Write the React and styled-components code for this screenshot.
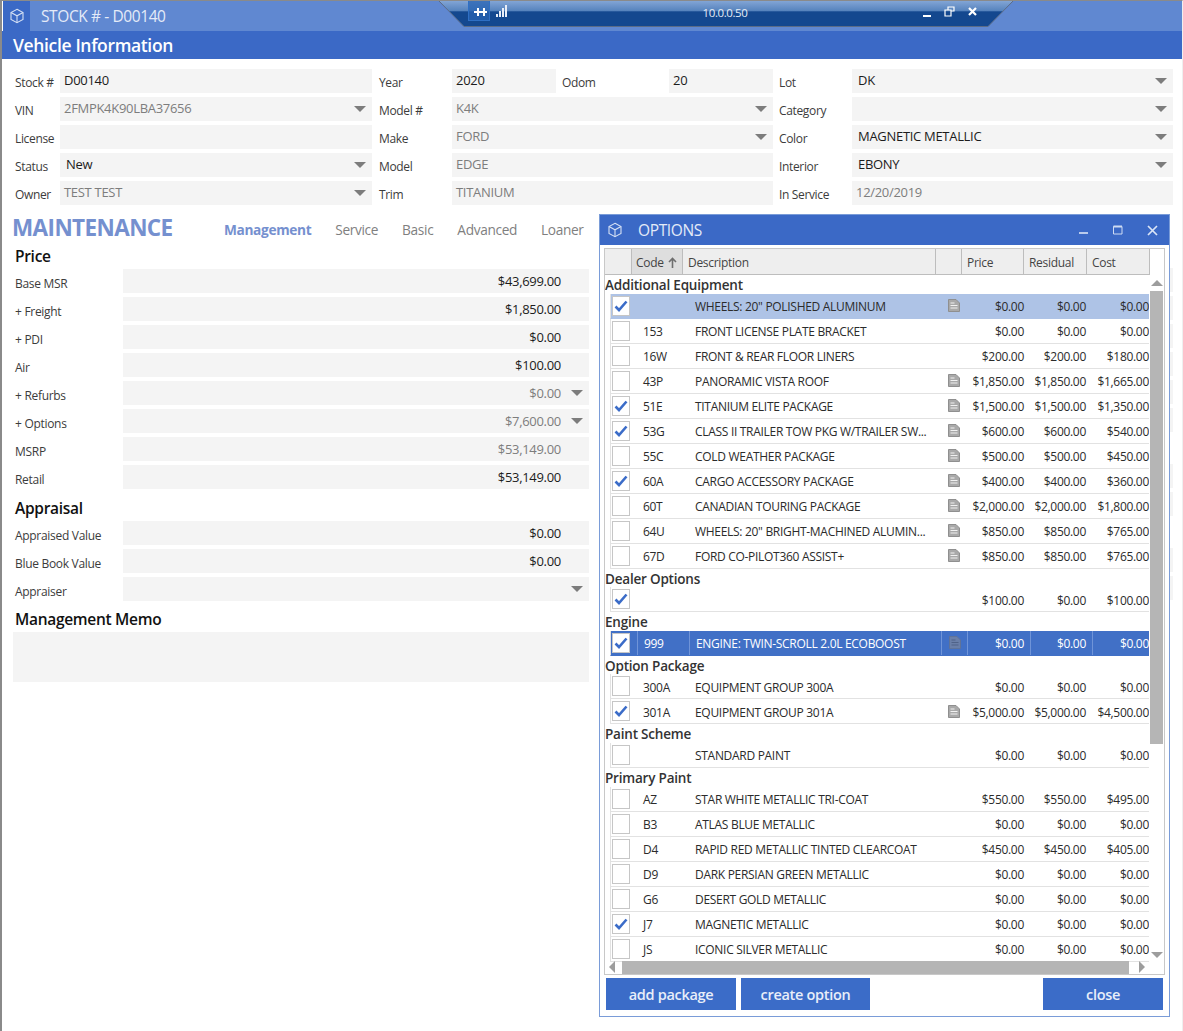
import React from 'react';
import styled, { createGlobalStyle } from 'styled-components';

const GlobalStyle = createGlobalStyle`
  html, body { margin: 0; padding: 0; background: #fff; }
  body { font-family: "Open Sans", "Noto Sans", sans-serif; color: #333; }
  * { box-sizing: border-box; }
`;

const Page = styled.div`
  position: relative;
  width: 1183px;
  height: 1031px;
  overflow: hidden;
  background: #fff;
  border-left: 2px solid #8a8a8a;
  border-top: 1px solid #8a8a8a;
  border-right: 1px solid #efefef;
`;

const TitleBar = styled.div`
  height: 30px;
  background: #6088d1;
  display: flex;
  align-items: center;
  margin-left: 1px;
`;

const TitleIcon = styled.div`
  width: 27px;
  height: 30px;
  display: flex;
  align-items: center;
  justify-content: center;
  background: #3b69c6;
`;

const TitleText = styled.div`
  margin-left: 11px;
  color: #e4ebf8;
  font-size: 15.5px;
  letter-spacing: -0.4px;
`;

const SectionBar = styled.div`
  height: 28px;
  margin-left: -2px;
  padding-left: 13px;
  display: flex;
  align-items: center;
  background: #3b69c6;
  color: #fff;
  font-size: 17.5px;
  font-weight: 600;
  letter-spacing: -0.35px;
`;

const RemoteBar = styled.div`
  position: absolute;
  left: 436px;
  top: -1px;
  width: 580px;
  height: 28px;
  z-index: 5;
`;

const RemoteShape = styled.svg`
  position: absolute;
  inset: 0;
`;

const RemoteText = styled.div`
  position: absolute;
  left: 264px;
  top: 5px;
  width: 46px;
  text-align: center;
  color: #e6edf7;
  font-size: 11.5px;
  letter-spacing: -0.4px;
`;

const FormGrid = styled.div`
  display: grid;
  grid-template-columns: 45px 312px 7px 73px 104px 6px 107px 104px 6px 73px 321px;
  grid-auto-rows: 24px;
  row-gap: 4px;
  margin-left: -2px;
  padding: 10px 0 0 15px;
`;

const Label = styled.div`
  font-size: 12px;
  letter-spacing: -0.35px;
  line-height: 24px;
  padding-top: 2px;
  color: #3c3c3c;
  white-space: nowrap;
  grid-column: ${p => p.$col} / span 1;
`;

const Field = styled.div`
  position: relative;
  height: 24px;
  background: #f4f4f4;
  font-size: 13px;
  letter-spacing: -0.3px;
  line-height: 23px;
  padding: 0 ${p => (p.$right ? '28px' : '4px')} 0 ${p => (p.$inset ? '6px' : '4px')};
  color: ${p => (p.$muted ? '#7d7d7d' : '#1c1c1c')};
  text-align: ${p => (p.$right ? 'right' : 'left')};
  grid-column: ${p => p.$col} / ${p => p.$end || 'span 1'};
`;

const Caret = styled.span`
  position: absolute;
  right: ${p => p.$right || 6}px;
  top: 9px;
  width: 0;
  height: 0;
  border-left: 6px solid transparent;
  border-right: 6px solid transparent;
  border-top: 6px solid #7c7c7c;
`;

const Lower = styled.div`
  display: grid;
  grid-template-columns: 576px 573px;
  column-gap: 11px;
  margin-left: -2px;
  padding: 10px 0 0 13px;
`;

const LeftColumn = styled.div`
  display: flex;
  flex-direction: column;
`;

const TabLine = styled.div`
  display: flex;
  align-items: center;
  height: 26px;
`;

const BigTitle = styled.div`
  width: 211px;
  margin-left: -1px;
  margin-right: 1px;
  color: #7590cf;
  font-size: 22.5px;
  font-weight: 700;
  letter-spacing: -0.6px;
  white-space: nowrap;
  margin-top: -2px;
`;

const Tabs = styled.div`
  display: flex;
  gap: 24px;
  padding-top: 2px;
`;

const Tab = styled.div`
  font-size: 13.7px;
  letter-spacing: -0.35px;
  font-weight: ${p => (p.$active ? 700 : 400)};
  color: ${p => (p.$active ? '#7590cf' : '#7f7f7f')};
`;

const Heading = styled.div`
  padding-left: 2px;
  font-size: 15.5px;
  line-height: 20px;
  font-weight: 600;
  letter-spacing: -0.3px;
  color: #111;
  margin: ${p => p.$top || 0}px 0 ${p => p.$bottom || 3}px;
`;

const PriceRow = styled.div`
  display: flex;
  height: 24px;
  margin-bottom: 4px;
`;

const PriceLabel = styled.div`
  width: 110px;
  padding: 3px 0 0 2px;
  font-size: 12px;
  letter-spacing: -0.3px;
  line-height: 24px;
  color: #3c3c3c;
`;

const PriceField = styled(Field)`
  flex: 1;
  line-height: 25px;
`;

const MemoBox = styled.div`
  height: 50px;
  background: #f4f4f4;
`;

const BehindColumn = styled.div`
  display: flex;
  flex-direction: column;
  padding-top: 53px;
`;

const BehindRow = styled.div`
  height: 24px;
  margin-bottom: 4px;
  margin-top: ${p => p.$skip || 0}px;
  background: #f4f4f4;
`;

const Dialog = styled.div`
  position: absolute;
  left: 597px;
  top: 213px;
  width: 571px;
  height: 803px;
  background: #fff;
  border: 1px solid #7a9cd8;
  z-index: 3;
  display: flex;
  flex-direction: column;
`;

const DialogHead = styled.div`
  height: 30px;
  flex: none;
  display: flex;
  align-items: center;
  padding-left: 7px;
  background: #3b69c6;
`;

const DialogTitle = styled.div`
  margin-left: 15px;
  color: #e4ebf8;
  font-size: 15.5px;
  letter-spacing: -0.35px;
  flex: 1;
`;

const WinButton = styled.button`
  width: 34px;
  height: 30px;
  padding: 0;
  border: 0;
  background: none;
  display: flex;
  align-items: center;
  justify-content: center;
`;

const TableFrame = styled.div`
  position: relative;
  flex: none;
  margin: 3px 4px 0;
  height: 727px;
  border: 1px solid #c8c8c8;
  overflow: hidden;
`;

const HeadRow = styled.div`
  display: grid;
  grid-template-columns: 27px 51px 253px 26px 62px 63px 63px;
  height: 26px;
  width: 545px;
  background: #eeeeee;
  border-bottom: 1px solid #bdbdbd;
`;

const HeadCell = styled.div`
  display: flex;
  align-items: center;
  gap: 4px;
  padding: 2px 0 0 ${p => (p.$sorted ? 4 : 5)}px;
  font-size: 12px;
  letter-spacing: -0.3px;
  color: #444;
  border-right: 1px solid #bdbdbd;
  background: ${p => (p.$sorted ? '#dedede' : 'transparent')};
`;

const GroupTitle = styled.div`
  height: 18.6px;
  line-height: 21px;
  font-size: 13.5px;
  font-weight: 600;
  letter-spacing: -0.2px;
  color: #333;
  white-space: nowrap;
`;

const Row = styled.div`
  display: grid;
  grid-template-columns: 26px 52px 252px 26px 63px 62px 63px;
  width: 539px;
  height: 25px;
  margin-left: 5px;
  overflow: hidden;
  align-items: center;
  font-size: 12px;
  letter-spacing: -0.3px;
  color: ${p => (p.$selected ? '#fff' : '#2b2b2b')};
  background: ${p => (p.$selected ? '#4170c6' : p.$picked ? '#aec3e6' : 'transparent')};
  border-bottom: 1px solid ${p => (p.$selected ? '#4170c6' : p.$picked ? '#aec3e6' : '#e2e2e2')};
  border-left: 1px solid #e2e2e2;
`;

const CheckCell = styled.div`
  display: flex;
  align-items: center;
  padding-left: 1px;
`;

const CheckBox = styled.div`
  width: 18px;
  height: 20px;
  background: #fff;
  border: 1px solid #c6c6c6;
  display: flex;
  align-items: center;
  justify-content: center;
  flex: none;
`;

const Cell = styled.div`
  height: 100%;
  display: flex;
  align-items: center;
  justify-content: ${p => (p.$money ? 'flex-end' : p.$center ? 'center' : 'flex-start')};
  padding: ${p => (p.$money ? '2px 6px 0 0' : p.$center ? '0' : '2px 0 0 6px')};
  white-space: nowrap;
  overflow: hidden;
  border-left: ${p => (p.$line ? '1px solid #6f94d8' : '0')};
`;

const ScrollY = styled.div`
  position: absolute;
  right: 1px;
  top: 42px;
  width: 13px;
  height: 453px;
  background: #b5b5b5;
`;

const ArrowV = styled.span`
  position: absolute;
  right: 1px;
  top: ${p => p.$top}px;
  width: 0;
  height: 0;
  border-left: 6px solid transparent;
  border-right: 6px solid transparent;
  ${p => (p.$up ? 'border-bottom: 6px solid #9d9d9d;' : 'border-top: 6px solid #9d9d9d;')}
`;

const ScrollX = styled.div`
  position: absolute;
  left: 17px;
  bottom: 0;
  width: 507px;
  height: 13px;
  background: #b5b5b5;
`;

const ArrowH = styled.span`
  position: absolute;
  bottom: 1px;
  left: ${p => p.$left}px;
  width: 0;
  height: 0;
  border-top: 6px solid transparent;
  border-bottom: 6px solid transparent;
  ${p => (p.$back ? 'border-right: 6px solid #9d9d9d;' : 'border-left: 6px solid #9d9d9d;')}
`;

const ButtonBar = styled.div`
  display: flex;
  gap: 5px;
  padding: 3px 6px 0;
`;

const ActionButton = styled.button`
  height: 32px;
  width: ${p => p.$w}px;
  margin-left: ${p => (p.$push ? 'auto' : 0)};
  border: 0;
  background: #3b6cc8;
  color: #e8eef9;
  font-family: inherit;
  font-size: 14.5px;
  font-weight: 600;
  letter-spacing: -0.3px;
`;

const Cube = ({ size = 16 }) => (
  <svg width={size} height={size} viewBox="0 0 16 16" fill="none" stroke="#d5e0f4" strokeWidth="1.1">
    <path d="M8 1.3 14 4.5v7L8 14.7 2 11.5v-7z" />
    <path d="M2 4.5 8 7.8l6-3.3M8 7.8v6.9" />
  </svg>
);

const Tick = () => (
  <svg width="14" height="12" viewBox="0 0 14 12" fill="none" stroke="#3b6cc8" strokeWidth="2.6">
    <path d="M1.5 6.5 5 10 12.5 1.5" />
  </svg>
);

const DocIcon = ({ dark }) => (
  <svg width="12" height="13" viewBox="0 0 12 13">
    <path d="M.5.5h7.5l3.5 3.5v8.5H.5z" fill={dark ? '#6a7fa8' : '#a9a9a9'} stroke={dark ? '#5f7399' : '#8f8f8f'} />
    <path d="M2.5 4h4M2.5 6.5h7M2.5 9h7" stroke={dark ? '#4f6288' : '#f1f1f1'} strokeWidth="1" />
  </svg>
);

const SortUp = () => (
  <svg width="9" height="11" viewBox="0 0 9 11" fill="none" stroke="#6e6e6e" strokeWidth="1.6">
    <path d="M4.5 11V1.5M1 5l3.5-3.5L8 5" />
  </svg>
);

const vehicleRows = [
  [['VIN', '2FMPK4K90LBA37656', { muted: true, caret: true }], ['Model #', 'K4K', { muted: true, caret: true }], ['Category', '', { caret: true }]],
  [['License', '', {}], ['Make', 'FORD', { muted: true, caret: true }], ['Color', 'MAGNETIC METALLIC', { inset: true, caret: true }]],
  [['Status', 'New', { inset: true, caret: true }], ['Model', 'EDGE', { muted: true }], ['Interior', 'EBONY', { inset: true, caret: true }]],
  [['Owner', 'TEST TEST', { muted: true, caret: true }], ['Trim', 'TITANIUM', { muted: true }], ['In Service', '12/20/2019', { muted: true }]],
];

const priceRows = [
  ['Base MSR', '$43,699.00'],
  ['+ Freight', '$1,850.00'],
  ['+ PDI', '$0.00'],
  ['Air', '$100.00'],
  ['+ Refurbs', '$0.00', true, true],
  ['+ Options', '$7,600.00', true, true],
  ['MSRP', '$53,149.00', true],
  ['Retail', '$53,149.00'],
];

const appraisalRows = [
  ['Appraised Value', '$0.00'],
  ['Blue Book Value', '$0.00'],
  ['Appraiser', '', true, true],
];

const behindSkips = [0, 0, 0, 0, 0, 0, 28, 0, 28, 0];

const optionGroups = [
  ['Additional Equipment', [
    { on: 1, picked: 1, desc: 'WHEELS: 20" POLISHED ALUMINUM', doc: 1, p: ['$0.00', '$0.00', '$0.00'] },
    { code: '153', desc: 'FRONT LICENSE PLATE BRACKET', p: ['$0.00', '$0.00', '$0.00'] },
    { code: '16W', desc: 'FRONT & REAR FLOOR LINERS', p: ['$200.00', '$200.00', '$180.00'] },
    { code: '43P', desc: 'PANORAMIC VISTA ROOF', doc: 1, p: ['$1,850.00', '$1,850.00', '$1,665.00'] },
    { code: '51E', on: 1, desc: 'TITANIUM ELITE PACKAGE', doc: 1, p: ['$1,500.00', '$1,500.00', '$1,350.00'] },
    { code: '53G', on: 1, desc: 'CLASS II TRAILER TOW PKG W/TRAILER SW...', doc: 1, p: ['$600.00', '$600.00', '$540.00'] },
    { code: '55C', desc: 'COLD WEATHER PACKAGE', doc: 1, p: ['$500.00', '$500.00', '$450.00'] },
    { code: '60A', on: 1, desc: 'CARGO ACCESSORY PACKAGE', doc: 1, p: ['$400.00', '$400.00', '$360.00'] },
    { code: '60T', desc: 'CANADIAN TOURING PACKAGE', doc: 1, p: ['$2,000.00', '$2,000.00', '$1,800.00'] },
    { code: '64U', desc: 'WHEELS: 20" BRIGHT-MACHINED ALUMIN...', doc: 1, p: ['$850.00', '$850.00', '$765.00'] },
    { code: '67D', desc: 'FORD CO-PILOT360 ASSIST+', doc: 1, p: ['$850.00', '$850.00', '$765.00'] },
  ]],
  ['Dealer Options', [{ on: 1, desc: '', p: ['$100.00', '$0.00', '$100.00'] }]],
  ['Engine', [{ code: '999', on: 1, selected: 1, desc: 'ENGINE: TWIN-SCROLL 2.0L ECOBOOST', doc: 1, p: ['$0.00', '$0.00', '$0.00'] }]],
  ['Option Package', [
    { code: '300A', desc: 'EQUIPMENT GROUP 300A', p: ['$0.00', '$0.00', '$0.00'] },
    { code: '301A', on: 1, desc: 'EQUIPMENT GROUP 301A', doc: 1, p: ['$5,000.00', '$5,000.00', '$4,500.00'] },
  ]],
  ['Paint Scheme', [{ desc: 'STANDARD PAINT', p: ['$0.00', '$0.00', '$0.00'] }]],
  ['Primary Paint', [
    { code: 'AZ', desc: 'STAR WHITE METALLIC TRI-COAT', p: ['$550.00', '$550.00', '$495.00'] },
    { code: 'B3', desc: 'ATLAS BLUE METALLIC', p: ['$0.00', '$0.00', '$0.00'] },
    { code: 'D4', desc: 'RAPID RED METALLIC TINTED CLEARCOAT', p: ['$450.00', '$450.00', '$405.00'] },
    { code: 'D9', desc: 'DARK PERSIAN GREEN METALLIC', p: ['$0.00', '$0.00', '$0.00'] },
    { code: 'G6', desc: 'DESERT GOLD METALLIC', p: ['$0.00', '$0.00', '$0.00'] },
    { code: 'J7', on: 1, desc: 'MAGNETIC METALLIC', p: ['$0.00', '$0.00', '$0.00'] },
    { code: 'JS', desc: 'ICONIC SILVER METALLIC', p: ['$0.00', '$0.00', '$0.00'] },
  ]],
];

const FormField = ({ col, end, value, opts }) => (
  <Field $col={col} $end={end} $muted={opts.muted} $inset={opts.inset}>
    {value}
    {opts.caret && <Caret />}
  </Field>
);

const VehicleForm = () => (
  <FormGrid>
    <Label $col={1}>Stock #</Label>
    <FormField col={2} value="D00140" opts={{}} />
    <Label $col={4}>Year</Label>
    <FormField col={5} value="2020" opts={{}} />
    <Label $col={7}>Odom</Label>
    <FormField col={8} value="20" opts={{}} />
    <Label $col={10}>Lot</Label>
    <FormField col={11} value="DK" opts={{ inset: true, caret: true }} />
    {vehicleRows.map(([a, b, c]) => (
      <React.Fragment key={a[0]}>
        <Label $col={1}>{a[0]}</Label>
        <FormField col={2} value={a[1]} opts={a[2]} />
        <Label $col={4}>{b[0]}</Label>
        <FormField col={5} end={9} value={b[1]} opts={b[2]} />
        <Label $col={10}>{c[0]}</Label>
        <FormField col={11} value={c[1]} opts={c[2]} />
      </React.Fragment>
    ))}
  </FormGrid>
);

const MoneyRow = ({ label, value, muted, caret }) => (
  <PriceRow>
    <PriceLabel>{label}</PriceLabel>
    <PriceField $right $muted={muted}>
      {value}
      {caret && <Caret $right={6} />}
    </PriceField>
  </PriceRow>
);

const OptionRow = ({ row }) => (
  <Row $selected={row.selected} $picked={row.picked}>
    <CheckCell>
      <CheckBox>{row.on && <Tick />}</CheckBox>
    </CheckCell>
    <Cell $line={row.selected}>{row.code}</Cell>
    <Cell $line={row.selected}>{row.desc}</Cell>
    <Cell $center $line={row.selected}>{row.doc && <DocIcon dark={row.selected} />}</Cell>
    {row.p.map((v, i) => (
      <Cell $money $line={row.selected} key={i}>{v}</Cell>
    ))}
  </Row>
);

const OptionsDialog = () => (
  <Dialog>
    <DialogHead>
      <Cube />
      <DialogTitle>OPTIONS</DialogTitle>
      <WinButton>
        <svg width="10" height="10" viewBox="0 0 10 10"><path d="M0 7h9v2H0z" fill="#b9cbec" /></svg>
      </WinButton>
      <WinButton>
        <svg width="10" height="10" viewBox="0 0 10 10" fill="none" stroke="#cfdcf3"><path d="M.5 1.5h8.5v7.5H.5z" /><path d="M.5 1.5h8.5" strokeWidth="2" /></svg>
      </WinButton>
      <WinButton>
        <svg width="11" height="11" viewBox="0 0 11 11" fill="none" stroke="#dbe5f6" strokeWidth="1.7"><path d="M1 1l9 9M10 1l-9 9" /></svg>
      </WinButton>
    </DialogHead>
    <TableFrame>
      <HeadRow>
        <HeadCell />
        <HeadCell $sorted>Code <SortUp /></HeadCell>
        <HeadCell>Description</HeadCell>
        <HeadCell />
        <HeadCell>Price</HeadCell>
        <HeadCell>Residual</HeadCell>
        <HeadCell>Cost</HeadCell>
      </HeadRow>
      {optionGroups.map(([title, rows]) => (
        <div key={title}>
          <GroupTitle>{title}</GroupTitle>
          {rows.map((row, i) => <OptionRow row={row} key={i} />)}
        </div>
      ))}
      <ArrowV $up $top={31} />
      <ScrollY />
      <ArrowV $top={703} />
      <ArrowH $back $left={4} />
      <ScrollX />
      <ArrowH $left={534} />
    </TableFrame>
    <ButtonBar>
      <ActionButton $w={130}>add package</ActionButton>
      <ActionButton $w={129}>create option</ActionButton>
      <ActionButton $w={120} $push>close</ActionButton>
    </ButtonBar>
  </Dialog>
);

const RemoteControlBar = () => (
  <RemoteBar>
    <RemoteShape width="580" height="28" viewBox="0 0 580 28">
      <defs>
        <linearGradient id="remoteFill" x1="0" y1="0" x2="0" y2="1">
          <stop offset="0" stopColor="#86a8d8" />
          <stop offset="0.42" stopColor="#5582bc" />
          <stop offset="0.44" stopColor="#14488f" />
          <stop offset="1" stopColor="#14488f" />
        </linearGradient>
      </defs>
      <path d="M0 0h576l-26 26.5H26z" fill="url(#remoteFill)" stroke="#5c6c86" />
      <rect x="30.5" y="0.5" width="21" height="20" fill="#2763b3" fillOpacity="0.75" stroke="#2f6fc4" />
      <path d="M36 12h13M40 8v8M46 8v8" stroke="#fff" strokeWidth="2" />
      <path d="M58 17h2v-3h-2zM61 17h2v-6h-2zM64 17h2V8h-2zM67 17h2V5h-2z" fill="#e9eef7" />
      <path d="M485 15h8v2h-8z" fill="#fff" />
      <path d="M507 10h6v6h-6zM510 10V7h6v4h-3" fill="none" stroke="#fff" strokeWidth="1.2" />
      <path d="M531 8l7 7M538 8l-7 7" stroke="#fff" strokeWidth="2.2" />
    </RemoteShape>
    <RemoteText>10.0.0.50</RemoteText>
  </RemoteBar>
);

export default function App() {
  return (
    <>
      <GlobalStyle />
      <Page>
        <TitleBar>
          <TitleIcon><Cube /></TitleIcon>
          <TitleText>STOCK # - D00140</TitleText>
        </TitleBar>
        <SectionBar>Vehicle Information</SectionBar>
        <RemoteControlBar />
        <VehicleForm />
        <Lower>
          <LeftColumn>
            <TabLine>
              <BigTitle>MAINTENANCE</BigTitle>
              <Tabs>
                <Tab $active>Management</Tab>
                <Tab>Service</Tab>
                <Tab>Basic</Tab>
                <Tab>Advanced</Tab>
                <Tab>Loaner</Tab>
              </Tabs>
            </TabLine>
            <Heading $top={5}>Price</Heading>
            {priceRows.map(([label, value, muted, caret]) => (
              <MoneyRow key={label} label={label} value={value} muted={muted} caret={caret} />
            ))}
            <Heading $top={5}>Appraisal</Heading>
            {appraisalRows.map(([label, value, muted, caret]) => (
              <MoneyRow key={label} label={label} value={value} muted={muted} caret={caret} />
            ))}
            <Heading $top={4} $bottom={3}>Management Memo</Heading>
            <MemoBox />
          </LeftColumn>
          <BehindColumn>
            {behindSkips.map((skip, i) => <BehindRow $skip={skip} key={i} />)}
          </BehindColumn>
        </Lower>
        <OptionsDialog />
      </Page>
    </>
  );
}
